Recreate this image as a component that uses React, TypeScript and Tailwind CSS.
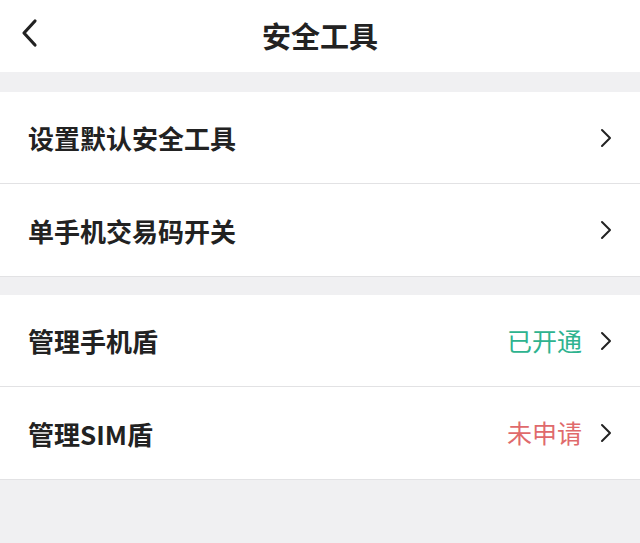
import React from "react";

type Row = { label: string; status?: string; tone?: "green" | "red" };

const Chevron = () => (
  <svg width="12" height="20" viewBox="0 0 12 20" fill="none" className="shrink-0">
    <path d="M2 2l8 8-8 8" stroke="#222" strokeWidth="2" strokeLinecap="round" strokeLinejoin="round" />
  </svg>
);

const Item: React.FC<{ row: Row; last?: boolean }> = ({ row, last }) => (
  <div className={`flex h-[92px] items-center pl-[28px] pr-[28px] ${last ? "" : "border-b border-[#e2e2e4]"}`}>
    <div className="flex-1 text-[26px] font-bold text-[#222]">{row.label}</div>
    {row.status && (
      <div className={`mr-[18px] text-[25px] ${row.tone === "green" ? "text-[#2eb38f]" : "text-[#e06a6c]"}`}>
        {row.status}
      </div>
    )}
    <Chevron />
  </div>
);

export default function App() {
  const groups: Row[][] = [
    [{ label: "设置默认安全工具" }, { label: "单手机交易码开关" }],
    [
      { label: "管理手机盾", status: "已开通", tone: "green" },
      { label: "管理SIM盾", status: "未申请", tone: "red" },
    ],
  ];
  return (
    <div className="flex h-[543px] w-[640px] flex-col bg-[#f0f0f2] font-['Noto_Sans_CJK_SC',sans-serif]">
      <div className="relative flex h-[72px] items-center justify-center bg-white">
        <svg width="18" height="30" viewBox="0 0 18 30" fill="none" className="absolute left-[20px] top-[18px]">
          <path d="M15 3L4 15l11 12" stroke="#222" strokeWidth="3.2" strokeLinecap="round" strokeLinejoin="round" />
        </svg>
        <div className="text-[29px] font-bold text-[#222]">安全工具</div>
      </div>
      <div className="mt-[20px] flex flex-col gap-[18px]">
        {groups.map((g, i) => (
          <div key={i} className="border-b border-[#e2e2e4] bg-white">
            {g.map((r, j) => (
              <Item key={j} row={r} last={j === g.length - 1} />
            ))}
          </div>
        ))}
      </div>
    </div>
  );
}
